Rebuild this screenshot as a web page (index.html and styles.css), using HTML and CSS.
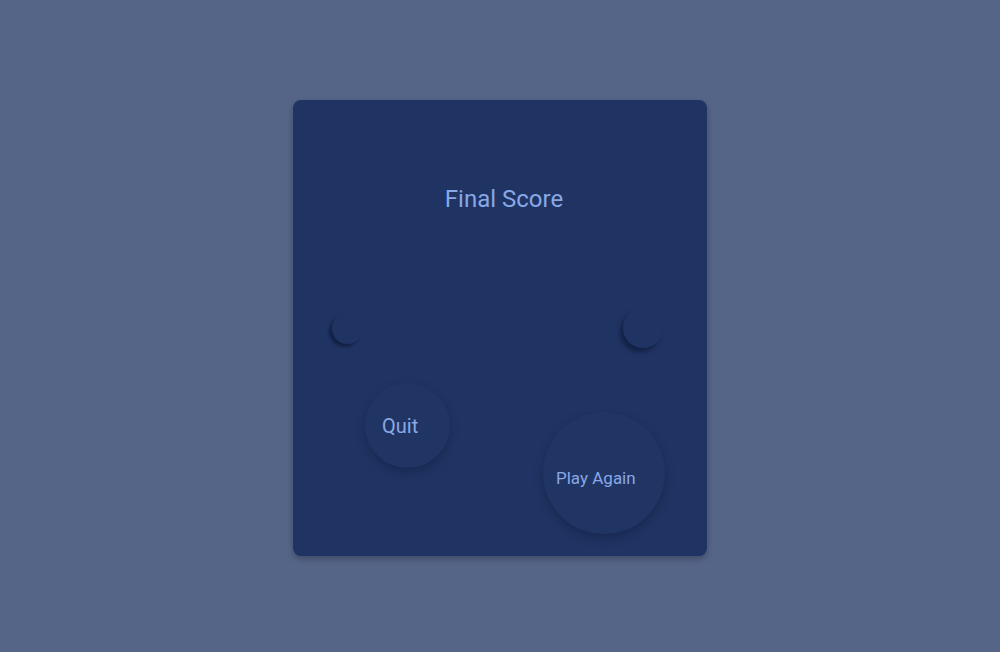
FILE: index.html
```html
<!DOCTYPE html>
<html>
<head>
<meta charset="utf-8">
<link rel="stylesheet" href="styles.css">
</head>
<body>
<div class="card">
  <h1 class="title">Final Score</h1>
  <div class="dots">
    <span class="dot dot-sm"></span>
    <span class="dot dot-lg"></span>
  </div>
  <div class="actions">
    <button class="btn btn-quit">Quit</button>
    <button class="btn btn-play">Play Again</button>
  </div>
</div>
</body>
</html>
```
FILE: styles.css
```css
html, body {
  margin: 0;
  padding: 0;
}
body {
  background: #556588;
  width: 1000px;
  height: 652px;
  font-family: Roboto, "Liberation Sans", sans-serif;
  display: flex;
  justify-content: center;
  align-items: flex-start;
}
.card {
  margin-top: 100px;
  width: 414px;
  height: 456px;
  background: #203463;
  border-radius: 8px;
  box-shadow: 0 3px 6px rgba(0, 0, 0, 0.25);
  box-sizing: border-box;
  display: flex;
  flex-direction: column;
}
.title {
  margin: 85px 0 0;
  font-size: 24px;
  line-height: 28px;
  font-weight: 400;
  color: #88a8e6;
  text-align: center;
  padding-left: 8px;
}
.dots {
  margin-top: 95px;
  padding: 0 44px 0 39px;
  display: flex;
  justify-content: space-between;
  align-items: center;
  height: 40px;
}
.dot {
  border-radius: 50%;
  background: #203463;
}
.dot-sm {
  width: 31px;
  height: 31px;
  box-shadow: -3px 3px 3px rgba(5, 15, 40, 0.5);
}
.dot-lg {
  width: 40px;
  height: 40px;
  box-shadow: -3px 4px 4px rgba(5, 15, 40, 0.5);
}
.actions {
  margin-top: 35px;
  padding: 0 42px 0 72px;
  display: flex;
  justify-content: space-between;
  align-items: flex-start;
}
.btn {
  border: none;
  border-radius: 50%;
  background: #213564;
  color: #88a8e6;
  font-family: Roboto, "Liberation Sans", sans-serif;
  text-align: left;
  padding: 0;
  box-shadow: 0 4px 10px rgba(10, 20, 45, 0.35);
}
.btn-quit {
  width: 85px;
  height: 85px;
  font-size: 20px;
  padding-left: 17px;
  padding-bottom: 0;
}
.btn-play {
  margin-top: 29px;
  width: 122px;
  height: 122px;
  font-size: 17px;
  padding-left: 13px;
  padding-top: 10px;
}
```
